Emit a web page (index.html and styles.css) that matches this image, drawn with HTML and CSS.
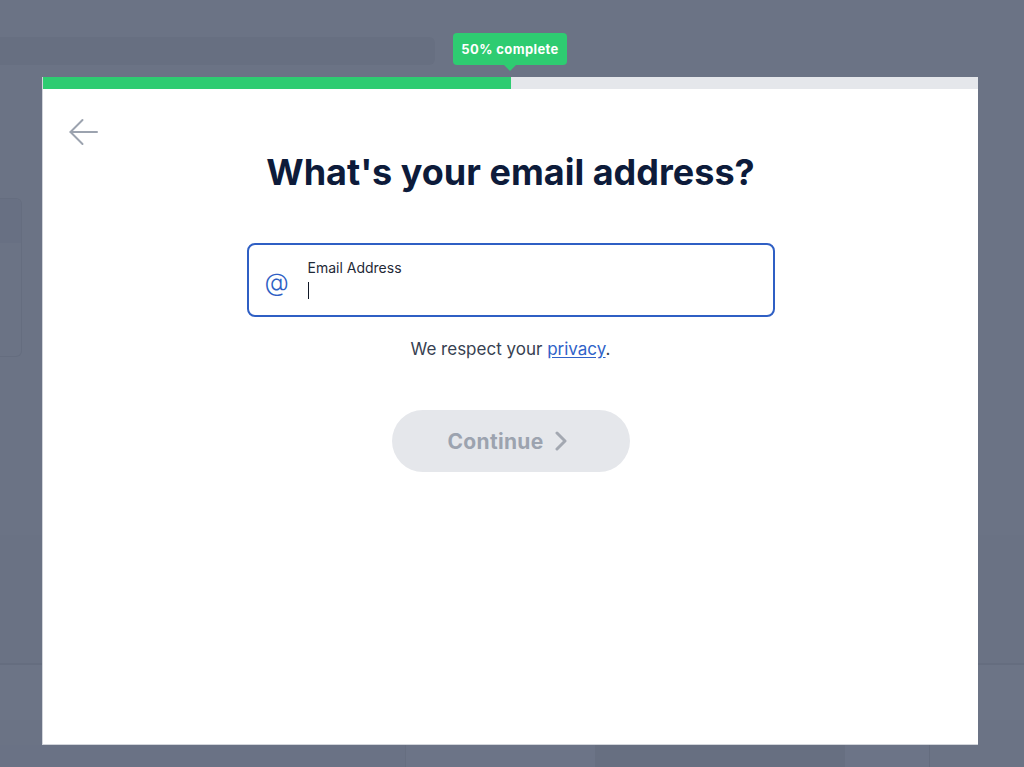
FILE: index.html
```html
<!DOCTYPE html>
<html lang="en">
<head>
<meta charset="utf-8">
<title>What's your email address?</title>
<link rel="stylesheet" href="styles.css">
</head>
<body>
<div class="backdrop">
  <div class="bg-bar"></div>
  <div class="bg-card"><div class="bg-card-head"></div></div>
  <div class="bg-band bg-band-a"></div>
  <div class="bg-band bg-band-b"></div>
  <div class="bg-band bg-band-c"></div>
  <div class="bg-bottom">
    <div class="bg-cell bg-cell-1"></div>
    <div class="bg-cell bg-cell-2"></div>
    <div class="bg-cell bg-cell-3"></div>
    <div class="bg-cell bg-cell-4"></div>
    <div class="bg-cell bg-cell-5"></div>
  </div>
</div>

<div class="tooltip">50% complete</div>

<div class="modal">
  <div class="progress"><div class="progress-fill" style="width:50%"></div></div>
  <div class="modal-body">
    <div class="back-row">
      <svg class="back" width="29" height="28" viewBox="0 0 29 28" fill="none" stroke="#9ca3af" stroke-width="2" stroke-linecap="round" stroke-linejoin="round">
        <path d="M28 14H1.5"/>
        <path d="M13.5 2L1.5 14l12 12"/>
      </svg>
    </div>
    <h1 class="title">What's your email address?</h1>
    <div class="field">
      <span class="field-icon">@</span>
      <div class="field-main">
        <span class="field-label">Email Address</span>
        <span class="caret"></span>
      </div>
    </div>
    <p class="privacy">We respect your <a href="#" class="privacy-link">privacy</a>.</p>
    <button class="continue" type="button">
      <span>Continue</span>
      <svg width="12" height="20" viewBox="0 0 12 20" fill="none" stroke="#a3a8b1" stroke-width="3" stroke-linecap="round" stroke-linejoin="round"><path d="M2 2l8 8-8 8"/></svg>
    </button>
  </div>
</div>
</body>
</html>
```

FILE: styles.css
```css
* { box-sizing: border-box; }
html, body { margin: 0; padding: 0; }
body {
  width: 1024px;
  height: 767px;
  overflow: hidden;
  background: #6b7385;
  font-family: Inter, "Noto Sans", sans-serif;
  position: relative;
}

/* dimmed page behind the modal */
.backdrop {
  display: flex;
  flex-direction: column;
  height: 767px;
}
.bg-bar {
  margin-top: 37px;
  width: 435px;
  height: 28px;
  border-radius: 0 6px 6px 0;
  background: #676f81;
}
.bg-card {
  margin-top: 133px;
  width: 22px;
  height: 159px;
  border-radius: 0 6px 6px 0;
  border: 1px solid #656d7f;
  border-left: none;
}
.bg-card-head {
  height: 44px;
  background: #687083;
  border-radius: 0 6px 0 0;
}
.bg-band { width: 100%; }
.bg-band-a { margin-top: 178px; height: 128px; background: #6a7284; }
.bg-band-b { height: 2px; background: #656d7f; }
.bg-band-c { height: 55px; background: #6c7486; }
.bg-bottom {
  margin-top: auto;
  height: 22px;
  display: flex;
}
.bg-cell-1 { width: 405px; background: #6a7285; }
.bg-cell-2 { width: 190px; background: #6c7487; border-left: 1px solid #666e80; }
.bg-cell-3 { width: 250px; background: #676f81; }
.bg-cell-4 { width: 85px; background: #6c7487; border-right: 1px solid #646c7e; }
.bg-cell-5 { flex: 1; background: #6b7385; }

/* progress tooltip */
.tooltip {
  position: absolute;
  left: 453px;
  top: 33px;
  width: 114px;
  height: 32px;
  border-radius: 4px;
  background: #2ecc71;
  color: #fff;
  font-size: 13px;
  font-weight: 700;
  display: flex;
  align-items: center;
  justify-content: center;
  letter-spacing: 0.4px;
}
.tooltip::after {
  content: "";
  position: absolute;
  left: 51px;
  bottom: -6px;
  border-left: 6px solid transparent;
  border-right: 6px solid transparent;
  border-top: 6px solid #2ecc71;
}

/* modal */
.modal {
  position: absolute;
  left: 42px;
  top: 77px;
  width: 936px;
  height: 668px;
  background: #fff;
  border-left: 1px solid #d2d5db;
  border-bottom: 1px solid #d2d5db;
  display: flex;
  flex-direction: column;
}
.progress {
  height: 12px;
  background: #e5e7eb;
  flex-shrink: 0;
}
.progress-fill {
  height: 100%;
  background: #2ecc71;
}
.modal-body {
  padding: 29px 27px 0;
  display: flex;
  flex-direction: column;
  align-items: center;
}
.back-row {
  align-self: stretch;
  height: 28px;
}
.back { display: block; margin-left: -1px; }

.title {
  margin: 4px 0 0;
  font-size: 36px;
  line-height: 44px;
  font-weight: 700;
  color: #0d1b3a;
  letter-spacing: 0;
}

.field {
  margin-top: 49px;
  width: 528px;
  height: 74px;
  border: 2px solid #2f5fc4;
  border-radius: 8px;
  display: flex;
  align-items: center;
  padding-left: 16px;
}
.field-icon {
  width: 43px;
  font-size: 25px;
  color: #2f5fc4;
  font-weight: 300;
  line-height: 1;
  margin-top: 4px;
}
.field-main {
  display: flex;
  flex-direction: column;
  align-self: flex-start;
  padding-top: 13px;
}
.field-label {
  font-size: 14px;
  line-height: 20px;
  color: #1f2937;
}
.caret {
  margin-top: 4px;
  width: 1px;
  height: 17px;
  background: #111827;
}

.privacy {
  margin: 20px 0 0;
  font-size: 17px;
  line-height: 24px;
  color: #374151;
}
.privacy-link {
  color: #2f62c8;
  text-decoration: underline;
  text-underline-offset: 2px;
}

.continue {
  margin-top: 49px;
  width: 238px;
  height: 62px;
  border: none;
  border-radius: 31px;
  background: #e5e7eb;
  color: #9ca3af;
  font-family: Inter, "Noto Sans", sans-serif;
  font-size: 21px;
  font-weight: 700;
  letter-spacing: 0.3px;
  display: flex;
  align-items: center;
  justify-content: center;
  gap: 12px;
  padding: 0 6px 0 0;
}
```
